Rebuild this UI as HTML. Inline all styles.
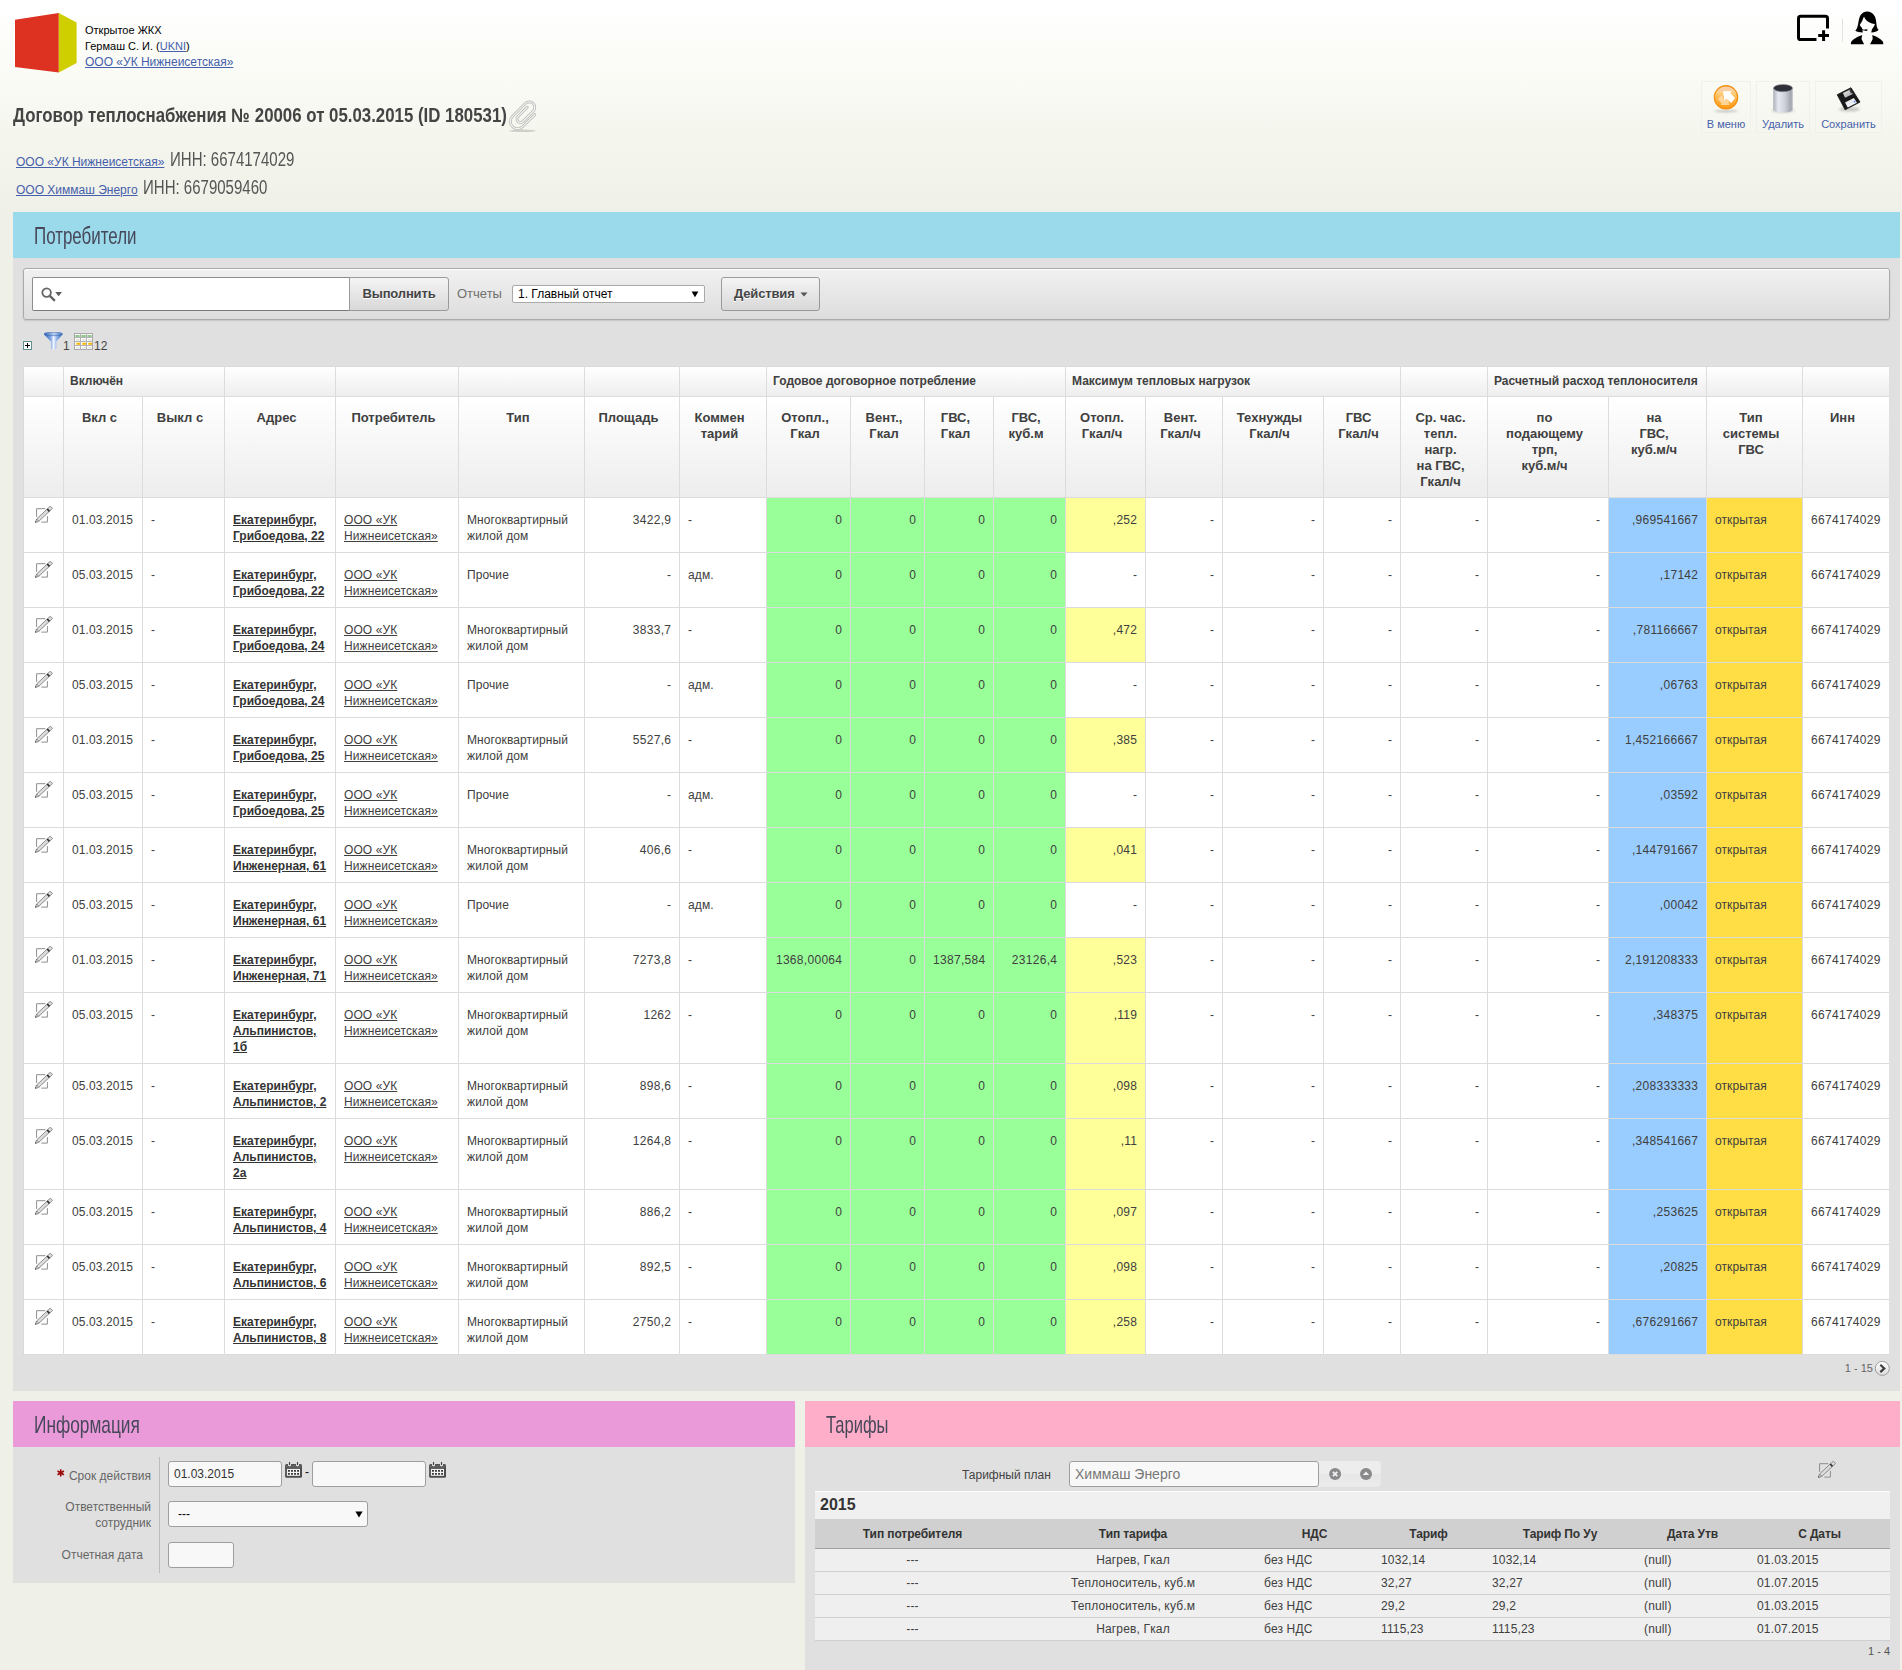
<!DOCTYPE html>
<html lang="ru">
<head>
<meta charset="utf-8">
<title>Договор теплоснабжения № 20006</title>
<style>
*{box-sizing:border-box}
html,body{margin:0;padding:0}
body{width:1902px;height:1670px;overflow:hidden;position:relative;font-family:"Liberation Sans",sans-serif;font-size:12px;color:#333;
 background:#eff0e8 linear-gradient(#ffffff 0,#ffffff 8px,#fafbf5 75px,#f4f5ed 140px,#eff0e8 215px) no-repeat;background-size:1902px 215px}
a{color:#4560ab;text-decoration:underline}
.abs{position:absolute}
.cond{display:inline-block;transform-origin:0 50%;white-space:nowrap}
/* header */
#hd{left:85px;top:23px;font-size:11px;line-height:15.75px;color:#000;white-space:nowrap}
#hd .l3{font-size:12px}
#title{left:13px;top:102.4px;font-size:19.4px;line-height:26px;font-weight:bold;color:#444;transform:scaleX(0.868)}
.innrow{left:16px;white-space:nowrap;font-size:12px;line-height:20px;height:20px}
.innrow .cond{position:absolute;top:-7.3px;font-size:20.9px;line-height:28px;color:#555;transform:scaleX(0.719)}
/* top buttons */
.tb{border:1px solid #f0f1eb;top:81px;height:52px;text-align:center;font-size:11px;color:#4560ab}
.tb span{position:absolute;left:-1px;right:-1px;top:35.500px;line-height:13px}
/* regions */
.rh{height:46px}
.rh .cond{position:absolute;left:21px;top:9.300px;font-size:23.7px;line-height:30px;color:#47475a}
.rb{background:#e0e0e0}
/* toolbar */
#bar{left:23px;top:268px;width:1867px;height:52px;border:1px solid #aaaaaa;border-radius:3px;background:linear-gradient(#f1f1f1,#dddddd);box-shadow:inset 0 1px 0 #fdfdfd,0 1px 2px rgba(0,0,0,.13)}
#srch{left:32px;top:277px;width:318px;height:34px;background:#fff;border:1px solid #8c8c8c;border-bottom-color:#7a7a7a;border-radius:2px 0 0 2px}
.btn{letter-spacing:-.15px;border:1px solid #9a9a9a;background:linear-gradient(#f4f4f4,#d8d8d8);font-weight:bold;font-size:13px;color:#444;text-align:center;line-height:32px;text-shadow:0 1px 0 #fff}
#go{left:349px;top:277px;width:100px;height:34px;border-radius:0 3px 3px 0}
#act{left:721px;top:277px;width:99px;height:34px;border-radius:3px;text-align:left;padding-left:12px}
#rep{left:457px;top:285px;font-size:13px;line-height:18px;color:#707070}
.sel{background:#fff;border:1px solid #a9a9a9;border-radius:2px;color:#000}
/* IR table */
table.ir{position:absolute;left:24px;top:367px;width:1865px;table-layout:fixed;border-collapse:separate;border-spacing:0;font-size:12px;line-height:16px;color:#404040}
table.ir th,table.ir td{border-right:1px solid #dcdcdc;border-bottom:1px solid #dcdcdc;vertical-align:top;overflow:hidden}
table.ir tr.g th{height:30px;padding:6px 0 0 6px;text-align:left;font-size:12px;font-weight:bold;background:linear-gradient(#ffffff,#eeeeee);white-space:nowrap;color:#404040}
table.ir tr.h th{height:101px;padding:13px 9px 0 2px;text-align:center;font-size:13px;font-weight:bold;background:linear-gradient(#ffffff,#ededed);color:#404040}
table.ir td{background:#fff;padding:14px 8px 8px 8px;text-align:left;white-space:nowrap;letter-spacing:.1px}
table.ir td.r{text-align:right;letter-spacing:.3px;padding-right:7.700px}
table.ir td.n{letter-spacing:.3px}
table.ir td.gr{background:#99ff99}
table.ir td.ye{background:#ffff99}
table.ir td.bl{background:#99ccff}
table.ir td.go{background:#ffdd44}
table.ir tr>*:last-child{border-right:0}
table.ir td.e{padding:8px 0 0 11px}
table.ir td a{color:#404040}
table.ir td a.ad{font-weight:bold;color:#333;letter-spacing:0}
svg.pen{display:block}
#tblb{left:23px;top:366px;width:1866px;height:989px;background:#dadada}
/* form */
.lbl{font-size:12px;line-height:16px;color:#666;text-align:right;white-space:nowrap}
.inp{height:26px;border:1px solid #9e9e9e;border-radius:3px;background:#f8f8f8;font-size:12px;line-height:24px;padding-left:5px;color:#333}
/* tariffs */
table.tf{position:absolute;left:815px;top:1519px;width:1075px;table-layout:fixed;border-collapse:separate;border-spacing:0;font-size:12px;color:#404040}
table.tf th{letter-spacing:-.1px;height:30px;background:#d0d0d0;border-bottom:1px solid #a0a0a0;font-size:12px;font-weight:bold;text-align:center;padding:0;color:#333;line-height:28px}
table.tf td{height:23px;background:#efefef;border-bottom:1px solid #cfcfcf;padding:0 0 0 8px;line-height:22px;white-space:nowrap;letter-spacing:.15px}
table.tf td.c{text-align:center;padding:0}
</style>
</head>
<body>

<!-- logo -->
<svg class="abs" style="left:14px;top:12px" width="64" height="62" viewBox="14 12 64 62">
 <polygon points="15,19.8 58.8,13 58.8,72.6 15,67" fill="#dd3122"/>
 <polygon points="58.8,13 76.6,22.6 76.6,62.9 58.8,72.6" fill="#cfcf00"/>
</svg>
<div id="hd" class="abs">Открытое ЖКХ<br>Гермаш С. И. (<a>UKNI</a>)<br><a class="l3">ООО «УК Нижнеисетская»</a></div>

<!-- top right icons -->
<svg class="abs" style="left:1795px;top:10px" width="92" height="38" viewBox="1795 10 92 38">
 <rect x="1798.5" y="16.2" width="29" height="23.4" rx="2.2" fill="none" stroke="#000" stroke-width="3"/>
 <rect x="1816.5" y="28.5" width="15" height="15" fill="#fdfdfb"/>
 <path d="M1818.2 35.6h10.8M1823.6 30.2v10.8" stroke="#000" stroke-width="3"/>
 <path d="M1842.5 19v23" stroke="#e2e2e2" stroke-width="1"/>
 <!-- operator -->
 <path d="M1867.200 11.400C1864.300 11.400 1862 12.800 1860.600 15.100C1859.300 17.200 1858.800 20.300 1858.200 23.600C1857.700 26.400 1857.100 28.900 1855.300 30.800C1857.200 31.900 1860.200 32.500 1862.800 32.400C1862.700 30.800 1862.400 29.300 1861.900 28C1860.800 27.100 1860.100 25.900 1859.800 24.700C1861.200 23.200 1862.500 20.900 1863.100 18.600C1863.400 17.900 1863.700 17.200 1864.100 16.700C1865.600 20.900 1869.800 23.400 1874.900 24C1874.600 25.300 1873.900 26.600 1873 27.700C1872.100 28.900 1871.500 30.500 1871.300 32.400C1874.100 32.500 1876.800 31.500 1878.600 30.100C1877.100 28.700 1876.600 26.300 1876.400 23.600C1876.100 20.300 1875.700 17.200 1873.900 15C1872.300 12.800 1870.100 11.400 1867.200 11.400Z" fill="#000"/>
 <path d="M1860.400 26.700C1861 28.300 1862 29.500 1863.500 30L1865.400 30.200" fill="none" stroke="#000" stroke-width=".9"/>
 <ellipse cx="1866.200" cy="30.100" rx="1.500" ry=".8" fill="#000"/>
 <path d="M1862.200 34.900C1859.500 35.700 1854.200 38.200 1851.700 41.100C1851 42 1850.900 43.200 1850.900 44.300H1864.100L1861.500 39.100Z" fill="#000"/>
 <path d="M1872.300 34.900C1875 35.700 1880.100 38.200 1882.500 41.100C1883.200 42 1883.300 43.200 1883.300 44.300H1870.100L1872.700 39.100Z" fill="#000"/>
</svg>

<!-- title -->
<div id="title" class="abs cond">Договор теплоснабжения № 20006 от 05.03.2015 (ID 180531)</div>
<svg class="abs" style="left:506px;top:98px" width="36" height="36" viewBox="0 0 36 36">
 <defs><filter id="bl" x="-20%" y="-200%" width="140%" height="500%"><feGaussianBlur stdDeviation=".7"/></filter></defs>
 <ellipse cx="16.500" cy="32.800" rx="13.500" ry="1.300" fill="#cfcfc8" filter="url(#bl)"/>
 <g transform="translate(17.200 17.500) rotate(45)" fill="none" stroke-linecap="round">
  <path d="M7.500-9V8.200A7.250 7.250 0 0 1-7 8.200V-10.100A5.500 5.500 0 0 1 4-10.100V4.400A3.500 3.500 0 0 1-3 4.400V-8.800" stroke="#b3b3b3" stroke-width="2.700"/>
  <path d="M7.500-9V8.200A7.250 7.250 0 0 1-7 8.200V-10.100A5.500 5.500 0 0 1 4-10.100V4.400A3.500 3.500 0 0 1-3 4.400V-8.800" stroke="#f3f3f1" stroke-width="1.300"/>
 </g>
</svg>

<div class="abs innrow" style="top:152px"><a>ООО «УК Нижнеисетская»</a><span class="cond" style="left:153.7px">ИНН: 6674174029</span></div>
<div class="abs innrow" style="top:180px"><a>ООО Химмаш Энерго</a><span class="cond" style="left:126.7px">ИНН: 6679059460</span></div>

<!-- buttons -->
<div class="abs tb" style="left:1701px;width:50px"><span>В меню</span></div>
<div class="abs tb" style="left:1756px;width:54px"><span>Удалить</span></div>
<div class="abs tb" style="left:1815px;width:67px"><span>Сохранить</span></div>
<svg class="abs" style="left:1700px;top:80px" width="184" height="36" viewBox="1700 80 184 36">
 <defs>
  <linearGradient id="og" x1="0" y1="0" x2="0" y2="1"><stop offset="0" stop-color="#f8cda6"/><stop offset=".22" stop-color="#fbd0a0"/><stop offset=".3" stop-color="#ffcf7e"/><stop offset=".6" stop-color="#ffb443"/><stop offset="1" stop-color="#ff9712"/></linearGradient>
  <linearGradient id="tg" x1="0" x2="1"><stop offset="0" stop-color="#aeb0b8"/><stop offset=".26" stop-color="#e6e9f2"/><stop offset=".6" stop-color="#cdd0d8"/><stop offset=".9" stop-color="#a3a6ae"/><stop offset="1" stop-color="#bbbec6"/></linearGradient>
  <linearGradient id="sh" x1="0" y1="0" x2="1" y2="1"><stop offset="0" stop-color="#f0f0f0"/><stop offset="1" stop-color="#9c9c9c"/></linearGradient>
  <filter id="b2" x="-20%" y="-100%" width="140%" height="300%"><feGaussianBlur stdDeviation=".8"/></filter>
 </defs>
 <!-- menu -->
 <ellipse cx="1726" cy="111.200" rx="12" ry="1.200" fill="#c4c6c4" filter="url(#b2)"/>
 <circle cx="1726" cy="97.350" r="11.600" fill="url(#og)" stroke="#f4900f" stroke-width="1.300"/>
 <path d="M1717.900 99.200L1722 94.900L1723.200 99L1726.700 99.600L1729 102.300V105H1720.700L1721.600 103.200Z" fill="#ffe0b2" opacity=".8"/>
 <path d="M1722.930 91.200L1731.650 91L1730.300 93.300L1735.100 97.900L1731.270 102.900L1726.290 98.860L1724.370 100.400Z" fill="#fff"/>
 <!-- trash -->
 <ellipse cx="1783" cy="110.600" rx="11.500" ry="2.400" fill="#d3d4d0" filter="url(#b2)"/>
 <path d="M1773.200 88.100V109.200C1773.200 111.100 1777.600 112.600 1783 112.600S1792.800 111.100 1792.800 109.200V88.100Z" fill="url(#tg)"/>
 <ellipse cx="1783" cy="88.100" rx="9.500" ry="3.600" fill="#303138" stroke="#8e9099" stroke-width=".6"/>
 <!-- floppy -->
 <ellipse cx="1849.300" cy="109.300" rx="10.500" ry="2.300" fill="#c9c9c6" filter="url(#b2)"/>
 <path d="M1837.200 94.700L1851 87.700L1860 102.100L1845.100 109.800Z" fill="#19191b" stroke="#19191b" stroke-width=".8" stroke-linejoin="round"/>
 <path d="M1842.900 93.100L1850.200 89.400L1852.800 94L1845.100 97.700Z" fill="url(#sh)"/>
 <path d="M1849.300 90.600L1850.600 90L1852.300 93L1851 93.600Z" fill="#3a3a3d"/>
 <path d="M1845.100 102.500L1853.900 98L1856.900 102.800L1847.700 107.400Z" fill="#f3f4f7"/>
 <path d="M1846.300 103.300L1853.500 99.600M1847.200 104.700L1854.400 101" stroke="#cfd3dc" stroke-width=".5"/>
 <circle cx="1854.600" cy="101.700" r=".9" fill="#5b8def"/>
</svg>

<!-- region: consumers -->
<div class="abs rh" style="left:13px;top:212px;width:1887px;background:#9adaea"><span class="cond" style="transform:scaleX(.7145)">Потребители</span></div>
<div class="abs rb" style="left:13px;top:258px;width:1887px;height:1133px"></div>
<div id="bar" class="abs"></div>
<div id="srch" class="abs">
 <svg class="abs" style="left:7px;top:8px" width="24" height="18" viewBox="0 0 24 18">
  <circle cx="6.600" cy="6.600" r="4.300" fill="none" stroke="#666" stroke-width="1.800"/>
  <path d="M9.800 9.800l4.400 4.400" stroke="#666" stroke-width="2.400" stroke-linecap="round"/>
  <path d="M15.200 6h6.800l-3.400 4.200z" fill="#5e5e5e"/>
 </svg>
</div>
<div id="go" class="abs btn">Выполнить</div>
<div id="rep" class="abs">Отчеты</div>
<div class="abs sel" style="left:512px;top:285px;width:193px;height:18px;font-size:12px;line-height:16px;padding-left:5px">1. Главный отчет
 <svg class="abs" style="left:178px;top:5px" width="8" height="7" viewBox="0 0 8 7"><path d="M.6.600h6.800L4 6.200z" fill="#000"/></svg></div>
<div id="act" class="abs btn">Действия
 <svg class="abs" style="left:78px;top:14px" width="8" height="5" viewBox="0 0 8 5"><path d="M.5.500h7L4 4.500z" fill="#555"/></svg></div>

<!-- small controls -->
<div class="abs" style="left:23px;top:341px;width:9px;height:9px;border:1px solid #5f8f8f;background:#fff">
 <svg class="abs" style="left:0;top:0" width="7" height="7" viewBox="0 0 7 7"><path d="M1 3.500h5M3.500 1v5" stroke="#000" stroke-width="1"/></svg></div>
<svg class="abs" style="left:43px;top:332px" width="21" height="19" viewBox="0 0 21 19">
 <defs><linearGradient id="fg" x1="0" x2="1"><stop offset="0" stop-color="#2b5fb2"/><stop offset=".36" stop-color="#7ea6e4"/><stop offset=".52" stop-color="#f3f7ff"/><stop offset=".66" stop-color="#9fbdef"/><stop offset="1" stop-color="#2b5fb2"/></linearGradient>
 <linearGradient id="fe" x1="0" x2="1"><stop offset="0" stop-color="#2f64b6"/><stop offset=".55" stop-color="#b9cff2"/><stop offset="1" stop-color="#3a70c4"/></linearGradient></defs>
 <path d="M.9 2.200L8 9.700V16.500Q10.600 18.500 13.300 16.500V9.700L19.600 2.200Z" fill="url(#fg)"/>
 <ellipse cx="10.250" cy="1.950" rx="9.300" ry="1.750" fill="url(#fe)" stroke="#2a5aa8" stroke-width=".5"/>
</svg>
<div class="abs" style="left:63px;top:338px;font-size:12px;line-height:16px;color:#444">1</div>
<svg class="abs" style="left:74px;top:333px" width="19" height="17" viewBox="0 0 19 17">
 <rect x=".5" y=".5" width="18" height="16" fill="#fdfdfd" stroke="#a9a9a9"/>
 <path d="M.5 4.500h18M.5 8.500h18M.5 12.500h18M6.500.500v16M12.500.500v16" stroke="#b3b3b3" stroke-width="1"/>
 <path d="M1.300 3h4.400M7.300 3h4.400M13.300 3h4.400" stroke="#6fb56a" stroke-width="1.500"/>
 <path d="M2 6.800h3.700M8 6.800h3.700M14 6.800h3.700M2 14.800h3.700M8 14.800h3.700M14 14.800h3.700" stroke="#dcdcdc" stroke-width="1.200"/>
 <path d="M2.300 10.700h3.700M8.300 10.700h3.700M14.300 10.700h3.700" stroke="#f7b500" stroke-width="1.900"/>
</svg>
<div class="abs" style="left:94px;top:338px;font-size:12px;line-height:16px;color:#444">12</div>

<div id="tblb" class="abs"></div>
<table class="ir"><colgroup><col style="width:40px"><col style="width:79px"><col style="width:82px"><col style="width:111px"><col style="width:123px"><col style="width:126px"><col style="width:95px"><col style="width:87px"><col style="width:84px"><col style="width:74px"><col style="width:69px"><col style="width:72px"><col style="width:80px"><col style="width:77px"><col style="width:101px"><col style="width:77px"><col style="width:87px"><col style="width:121px"><col style="width:98px"><col style="width:96px"><col style="width:86px"></colgroup>
<tr class="g"><th colspan="1"></th><th colspan="2">Включён</th><th colspan="1"></th><th colspan="1"></th><th colspan="1"></th><th colspan="1"></th><th colspan="1"></th><th colspan="4">Годовое договорное потребление</th><th colspan="4">Максимум тепловых нагрузок</th><th colspan="1"></th><th colspan="2">Расчетный расход теплоносителя</th><th colspan="1"></th><th colspan="1"></th></tr>
<tr class="h"><th></th><th>Вкл с</th><th>Выкл с</th><th>Адрес</th><th>Потребитель</th><th>Тип</th><th>Площадь</th><th>Коммен<br>тарий</th><th>Отопл.,<br>Гкал</th><th>Вент.,<br>Гкал</th><th>ГВС,<br>Гкал</th><th>ГВС,<br>куб.м</th><th>Отопл.<br>Гкал/ч</th><th>Вент.<br>Гкал/ч</th><th>Технужды<br>Гкал/ч</th><th>ГВС<br>Гкал/ч</th><th>Ср. час.<br>тепл.<br>нагр.<br>на ГВС,<br>Гкал/ч</th><th>по<br>подающему<br>трп,<br>куб.м/ч</th><th>на<br>ГВС,<br>куб.м/ч</th><th>Тип<br>системы<br>ГВС</th><th>Инн</th></tr>
<tr><td class="e"><svg class="pen" width="19" height="18" viewBox="0 0 19 18"><path d="M10.400 2.700H1.600V10.900M6.300 16.100H12.400V10.100" fill="none" stroke="#8e8e8e"/><path d="M.1 16.600L1.630 12.970L15.300.130L17.500 2.470L3.810 15.310Z" fill="#dcdcdc" stroke="#757575" stroke-width=".8"/><path d="M12.250 3L14.430 5.340" stroke="#2e2e2e" stroke-width="1.700"/><path d="M1.630 12.970L3.810 15.310" stroke="#555" stroke-width=".6"/><path d="M.1 16.600L.75 15.100L1.550 15.950Z" fill="#444"/></svg></td><td>01.03.2015</td><td>-</td><td><a class="ad">Екатеринбург,<br>Грибоедова, 22</a></td><td><a class="cs">ООО «УК<br>Нижнеисетская»</a></td><td>Многоквартирный<br>жилой дом</td><td class="r">3422,9</td><td>-</td><td class="r gr">0</td><td class="r gr">0</td><td class="r gr">0</td><td class="r gr">0</td><td class="r ye">,252</td><td class="r">-</td><td class="r">-</td><td class="r">-</td><td class="r">-</td><td class="r">-</td><td class="r bl">,969541667</td><td class="go">открытая</td><td class="n">6674174029</td></tr>
<tr><td class="e"><svg class="pen" width="19" height="18" viewBox="0 0 19 18"><path d="M10.400 2.700H1.600V10.900M6.300 16.100H12.400V10.100" fill="none" stroke="#8e8e8e"/><path d="M.1 16.600L1.630 12.970L15.300.130L17.500 2.470L3.810 15.310Z" fill="#dcdcdc" stroke="#757575" stroke-width=".8"/><path d="M12.250 3L14.430 5.340" stroke="#2e2e2e" stroke-width="1.700"/><path d="M1.630 12.970L3.810 15.310" stroke="#555" stroke-width=".6"/><path d="M.1 16.600L.75 15.100L1.550 15.950Z" fill="#444"/></svg></td><td>05.03.2015</td><td>-</td><td><a class="ad">Екатеринбург,<br>Грибоедова, 22</a></td><td><a class="cs">ООО «УК<br>Нижнеисетская»</a></td><td>Прочие</td><td class="r">-</td><td>адм.</td><td class="r gr">0</td><td class="r gr">0</td><td class="r gr">0</td><td class="r gr">0</td><td class="r">-</td><td class="r">-</td><td class="r">-</td><td class="r">-</td><td class="r">-</td><td class="r">-</td><td class="r bl">,17142</td><td class="go">открытая</td><td class="n">6674174029</td></tr>
<tr><td class="e"><svg class="pen" width="19" height="18" viewBox="0 0 19 18"><path d="M10.400 2.700H1.600V10.900M6.300 16.100H12.400V10.100" fill="none" stroke="#8e8e8e"/><path d="M.1 16.600L1.630 12.970L15.300.130L17.500 2.470L3.810 15.310Z" fill="#dcdcdc" stroke="#757575" stroke-width=".8"/><path d="M12.250 3L14.430 5.340" stroke="#2e2e2e" stroke-width="1.700"/><path d="M1.630 12.970L3.810 15.310" stroke="#555" stroke-width=".6"/><path d="M.1 16.600L.75 15.100L1.550 15.950Z" fill="#444"/></svg></td><td>01.03.2015</td><td>-</td><td><a class="ad">Екатеринбург,<br>Грибоедова, 24</a></td><td><a class="cs">ООО «УК<br>Нижнеисетская»</a></td><td>Многоквартирный<br>жилой дом</td><td class="r">3833,7</td><td>-</td><td class="r gr">0</td><td class="r gr">0</td><td class="r gr">0</td><td class="r gr">0</td><td class="r ye">,472</td><td class="r">-</td><td class="r">-</td><td class="r">-</td><td class="r">-</td><td class="r">-</td><td class="r bl">,781166667</td><td class="go">открытая</td><td class="n">6674174029</td></tr>
<tr><td class="e"><svg class="pen" width="19" height="18" viewBox="0 0 19 18"><path d="M10.400 2.700H1.600V10.900M6.300 16.100H12.400V10.100" fill="none" stroke="#8e8e8e"/><path d="M.1 16.600L1.630 12.970L15.300.130L17.500 2.470L3.810 15.310Z" fill="#dcdcdc" stroke="#757575" stroke-width=".8"/><path d="M12.250 3L14.430 5.340" stroke="#2e2e2e" stroke-width="1.700"/><path d="M1.630 12.970L3.810 15.310" stroke="#555" stroke-width=".6"/><path d="M.1 16.600L.75 15.100L1.550 15.950Z" fill="#444"/></svg></td><td>05.03.2015</td><td>-</td><td><a class="ad">Екатеринбург,<br>Грибоедова, 24</a></td><td><a class="cs">ООО «УК<br>Нижнеисетская»</a></td><td>Прочие</td><td class="r">-</td><td>адм.</td><td class="r gr">0</td><td class="r gr">0</td><td class="r gr">0</td><td class="r gr">0</td><td class="r">-</td><td class="r">-</td><td class="r">-</td><td class="r">-</td><td class="r">-</td><td class="r">-</td><td class="r bl">,06763</td><td class="go">открытая</td><td class="n">6674174029</td></tr>
<tr><td class="e"><svg class="pen" width="19" height="18" viewBox="0 0 19 18"><path d="M10.400 2.700H1.600V10.900M6.300 16.100H12.400V10.100" fill="none" stroke="#8e8e8e"/><path d="M.1 16.600L1.630 12.970L15.300.130L17.500 2.470L3.810 15.310Z" fill="#dcdcdc" stroke="#757575" stroke-width=".8"/><path d="M12.250 3L14.430 5.340" stroke="#2e2e2e" stroke-width="1.700"/><path d="M1.630 12.970L3.810 15.310" stroke="#555" stroke-width=".6"/><path d="M.1 16.600L.75 15.100L1.550 15.950Z" fill="#444"/></svg></td><td>01.03.2015</td><td>-</td><td><a class="ad">Екатеринбург,<br>Грибоедова, 25</a></td><td><a class="cs">ООО «УК<br>Нижнеисетская»</a></td><td>Многоквартирный<br>жилой дом</td><td class="r">5527,6</td><td>-</td><td class="r gr">0</td><td class="r gr">0</td><td class="r gr">0</td><td class="r gr">0</td><td class="r ye">,385</td><td class="r">-</td><td class="r">-</td><td class="r">-</td><td class="r">-</td><td class="r">-</td><td class="r bl">1,452166667</td><td class="go">открытая</td><td class="n">6674174029</td></tr>
<tr><td class="e"><svg class="pen" width="19" height="18" viewBox="0 0 19 18"><path d="M10.400 2.700H1.600V10.900M6.300 16.100H12.400V10.100" fill="none" stroke="#8e8e8e"/><path d="M.1 16.600L1.630 12.970L15.300.130L17.500 2.470L3.810 15.310Z" fill="#dcdcdc" stroke="#757575" stroke-width=".8"/><path d="M12.250 3L14.430 5.340" stroke="#2e2e2e" stroke-width="1.700"/><path d="M1.630 12.970L3.810 15.310" stroke="#555" stroke-width=".6"/><path d="M.1 16.600L.75 15.100L1.550 15.950Z" fill="#444"/></svg></td><td>05.03.2015</td><td>-</td><td><a class="ad">Екатеринбург,<br>Грибоедова, 25</a></td><td><a class="cs">ООО «УК<br>Нижнеисетская»</a></td><td>Прочие</td><td class="r">-</td><td>адм.</td><td class="r gr">0</td><td class="r gr">0</td><td class="r gr">0</td><td class="r gr">0</td><td class="r">-</td><td class="r">-</td><td class="r">-</td><td class="r">-</td><td class="r">-</td><td class="r">-</td><td class="r bl">,03592</td><td class="go">открытая</td><td class="n">6674174029</td></tr>
<tr><td class="e"><svg class="pen" width="19" height="18" viewBox="0 0 19 18"><path d="M10.400 2.700H1.600V10.900M6.300 16.100H12.400V10.100" fill="none" stroke="#8e8e8e"/><path d="M.1 16.600L1.630 12.970L15.300.130L17.500 2.470L3.810 15.310Z" fill="#dcdcdc" stroke="#757575" stroke-width=".8"/><path d="M12.250 3L14.430 5.340" stroke="#2e2e2e" stroke-width="1.700"/><path d="M1.630 12.970L3.810 15.310" stroke="#555" stroke-width=".6"/><path d="M.1 16.600L.75 15.100L1.550 15.950Z" fill="#444"/></svg></td><td>01.03.2015</td><td>-</td><td><a class="ad">Екатеринбург,<br>Инженерная, 61</a></td><td><a class="cs">ООО «УК<br>Нижнеисетская»</a></td><td>Многоквартирный<br>жилой дом</td><td class="r">406,6</td><td>-</td><td class="r gr">0</td><td class="r gr">0</td><td class="r gr">0</td><td class="r gr">0</td><td class="r ye">,041</td><td class="r">-</td><td class="r">-</td><td class="r">-</td><td class="r">-</td><td class="r">-</td><td class="r bl">,144791667</td><td class="go">открытая</td><td class="n">6674174029</td></tr>
<tr><td class="e"><svg class="pen" width="19" height="18" viewBox="0 0 19 18"><path d="M10.400 2.700H1.600V10.900M6.300 16.100H12.400V10.100" fill="none" stroke="#8e8e8e"/><path d="M.1 16.600L1.630 12.970L15.300.130L17.500 2.470L3.810 15.310Z" fill="#dcdcdc" stroke="#757575" stroke-width=".8"/><path d="M12.250 3L14.430 5.340" stroke="#2e2e2e" stroke-width="1.700"/><path d="M1.630 12.970L3.810 15.310" stroke="#555" stroke-width=".6"/><path d="M.1 16.600L.75 15.100L1.550 15.950Z" fill="#444"/></svg></td><td>05.03.2015</td><td>-</td><td><a class="ad">Екатеринбург,<br>Инженерная, 61</a></td><td><a class="cs">ООО «УК<br>Нижнеисетская»</a></td><td>Прочие</td><td class="r">-</td><td>адм.</td><td class="r gr">0</td><td class="r gr">0</td><td class="r gr">0</td><td class="r gr">0</td><td class="r">-</td><td class="r">-</td><td class="r">-</td><td class="r">-</td><td class="r">-</td><td class="r">-</td><td class="r bl">,00042</td><td class="go">открытая</td><td class="n">6674174029</td></tr>
<tr><td class="e"><svg class="pen" width="19" height="18" viewBox="0 0 19 18"><path d="M10.400 2.700H1.600V10.900M6.300 16.100H12.400V10.100" fill="none" stroke="#8e8e8e"/><path d="M.1 16.600L1.630 12.970L15.300.130L17.500 2.470L3.810 15.310Z" fill="#dcdcdc" stroke="#757575" stroke-width=".8"/><path d="M12.250 3L14.430 5.340" stroke="#2e2e2e" stroke-width="1.700"/><path d="M1.630 12.970L3.810 15.310" stroke="#555" stroke-width=".6"/><path d="M.1 16.600L.75 15.100L1.550 15.950Z" fill="#444"/></svg></td><td>01.03.2015</td><td>-</td><td><a class="ad">Екатеринбург,<br>Инженерная, 71</a></td><td><a class="cs">ООО «УК<br>Нижнеисетская»</a></td><td>Многоквартирный<br>жилой дом</td><td class="r">7273,8</td><td>-</td><td class="r gr">1368,00064</td><td class="r gr">0</td><td class="r gr">1387,584</td><td class="r gr">23126,4</td><td class="r ye">,523</td><td class="r">-</td><td class="r">-</td><td class="r">-</td><td class="r">-</td><td class="r">-</td><td class="r bl">2,191208333</td><td class="go">открытая</td><td class="n">6674174029</td></tr>
<tr><td class="e"><svg class="pen" width="19" height="18" viewBox="0 0 19 18"><path d="M10.400 2.700H1.600V10.900M6.300 16.100H12.400V10.100" fill="none" stroke="#8e8e8e"/><path d="M.1 16.600L1.630 12.970L15.300.130L17.500 2.470L3.810 15.310Z" fill="#dcdcdc" stroke="#757575" stroke-width=".8"/><path d="M12.250 3L14.430 5.340" stroke="#2e2e2e" stroke-width="1.700"/><path d="M1.630 12.970L3.810 15.310" stroke="#555" stroke-width=".6"/><path d="M.1 16.600L.75 15.100L1.550 15.950Z" fill="#444"/></svg></td><td>05.03.2015</td><td>-</td><td><a class="ad">Екатеринбург,<br>Альпинистов,<br>1б</a></td><td><a class="cs">ООО «УК<br>Нижнеисетская»</a></td><td>Многоквартирный<br>жилой дом</td><td class="r">1262</td><td>-</td><td class="r gr">0</td><td class="r gr">0</td><td class="r gr">0</td><td class="r gr">0</td><td class="r ye">,119</td><td class="r">-</td><td class="r">-</td><td class="r">-</td><td class="r">-</td><td class="r">-</td><td class="r bl">,348375</td><td class="go">открытая</td><td class="n">6674174029</td></tr>
<tr><td class="e"><svg class="pen" width="19" height="18" viewBox="0 0 19 18"><path d="M10.400 2.700H1.600V10.900M6.300 16.100H12.400V10.100" fill="none" stroke="#8e8e8e"/><path d="M.1 16.600L1.630 12.970L15.300.130L17.500 2.470L3.810 15.310Z" fill="#dcdcdc" stroke="#757575" stroke-width=".8"/><path d="M12.250 3L14.430 5.340" stroke="#2e2e2e" stroke-width="1.700"/><path d="M1.630 12.970L3.810 15.310" stroke="#555" stroke-width=".6"/><path d="M.1 16.600L.75 15.100L1.550 15.950Z" fill="#444"/></svg></td><td>05.03.2015</td><td>-</td><td><a class="ad">Екатеринбург,<br>Альпинистов, 2</a></td><td><a class="cs">ООО «УК<br>Нижнеисетская»</a></td><td>Многоквартирный<br>жилой дом</td><td class="r">898,6</td><td>-</td><td class="r gr">0</td><td class="r gr">0</td><td class="r gr">0</td><td class="r gr">0</td><td class="r ye">,098</td><td class="r">-</td><td class="r">-</td><td class="r">-</td><td class="r">-</td><td class="r">-</td><td class="r bl">,208333333</td><td class="go">открытая</td><td class="n">6674174029</td></tr>
<tr><td class="e"><svg class="pen" width="19" height="18" viewBox="0 0 19 18"><path d="M10.400 2.700H1.600V10.900M6.300 16.100H12.400V10.100" fill="none" stroke="#8e8e8e"/><path d="M.1 16.600L1.630 12.970L15.300.130L17.500 2.470L3.810 15.310Z" fill="#dcdcdc" stroke="#757575" stroke-width=".8"/><path d="M12.250 3L14.430 5.340" stroke="#2e2e2e" stroke-width="1.700"/><path d="M1.630 12.970L3.810 15.310" stroke="#555" stroke-width=".6"/><path d="M.1 16.600L.75 15.100L1.550 15.950Z" fill="#444"/></svg></td><td>05.03.2015</td><td>-</td><td><a class="ad">Екатеринбург,<br>Альпинистов,<br>2а</a></td><td><a class="cs">ООО «УК<br>Нижнеисетская»</a></td><td>Многоквартирный<br>жилой дом</td><td class="r">1264,8</td><td>-</td><td class="r gr">0</td><td class="r gr">0</td><td class="r gr">0</td><td class="r gr">0</td><td class="r ye">,11</td><td class="r">-</td><td class="r">-</td><td class="r">-</td><td class="r">-</td><td class="r">-</td><td class="r bl">,348541667</td><td class="go">открытая</td><td class="n">6674174029</td></tr>
<tr><td class="e"><svg class="pen" width="19" height="18" viewBox="0 0 19 18"><path d="M10.400 2.700H1.600V10.900M6.300 16.100H12.400V10.100" fill="none" stroke="#8e8e8e"/><path d="M.1 16.600L1.630 12.970L15.300.130L17.500 2.470L3.810 15.310Z" fill="#dcdcdc" stroke="#757575" stroke-width=".8"/><path d="M12.250 3L14.430 5.340" stroke="#2e2e2e" stroke-width="1.700"/><path d="M1.630 12.970L3.810 15.310" stroke="#555" stroke-width=".6"/><path d="M.1 16.600L.75 15.100L1.550 15.950Z" fill="#444"/></svg></td><td>05.03.2015</td><td>-</td><td><a class="ad">Екатеринбург,<br>Альпинистов, 4</a></td><td><a class="cs">ООО «УК<br>Нижнеисетская»</a></td><td>Многоквартирный<br>жилой дом</td><td class="r">886,2</td><td>-</td><td class="r gr">0</td><td class="r gr">0</td><td class="r gr">0</td><td class="r gr">0</td><td class="r ye">,097</td><td class="r">-</td><td class="r">-</td><td class="r">-</td><td class="r">-</td><td class="r">-</td><td class="r bl">,253625</td><td class="go">открытая</td><td class="n">6674174029</td></tr>
<tr><td class="e"><svg class="pen" width="19" height="18" viewBox="0 0 19 18"><path d="M10.400 2.700H1.600V10.900M6.300 16.100H12.400V10.100" fill="none" stroke="#8e8e8e"/><path d="M.1 16.600L1.630 12.970L15.300.130L17.500 2.470L3.810 15.310Z" fill="#dcdcdc" stroke="#757575" stroke-width=".8"/><path d="M12.250 3L14.430 5.340" stroke="#2e2e2e" stroke-width="1.700"/><path d="M1.630 12.970L3.810 15.310" stroke="#555" stroke-width=".6"/><path d="M.1 16.600L.75 15.100L1.550 15.950Z" fill="#444"/></svg></td><td>05.03.2015</td><td>-</td><td><a class="ad">Екатеринбург,<br>Альпинистов, 6</a></td><td><a class="cs">ООО «УК<br>Нижнеисетская»</a></td><td>Многоквартирный<br>жилой дом</td><td class="r">892,5</td><td>-</td><td class="r gr">0</td><td class="r gr">0</td><td class="r gr">0</td><td class="r gr">0</td><td class="r ye">,098</td><td class="r">-</td><td class="r">-</td><td class="r">-</td><td class="r">-</td><td class="r">-</td><td class="r bl">,20825</td><td class="go">открытая</td><td class="n">6674174029</td></tr>
<tr><td class="e"><svg class="pen" width="19" height="18" viewBox="0 0 19 18"><path d="M10.400 2.700H1.600V10.900M6.300 16.100H12.400V10.100" fill="none" stroke="#8e8e8e"/><path d="M.1 16.600L1.630 12.970L15.300.130L17.500 2.470L3.810 15.310Z" fill="#dcdcdc" stroke="#757575" stroke-width=".8"/><path d="M12.250 3L14.430 5.340" stroke="#2e2e2e" stroke-width="1.700"/><path d="M1.630 12.970L3.810 15.310" stroke="#555" stroke-width=".6"/><path d="M.1 16.600L.75 15.100L1.550 15.950Z" fill="#444"/></svg></td><td>05.03.2015</td><td>-</td><td><a class="ad">Екатеринбург,<br>Альпинистов, 8</a></td><td><a class="cs">ООО «УК<br>Нижнеисетская»</a></td><td>Многоквартирный<br>жилой дом</td><td class="r">2750,2</td><td>-</td><td class="r gr">0</td><td class="r gr">0</td><td class="r gr">0</td><td class="r gr">0</td><td class="r ye">,258</td><td class="r">-</td><td class="r">-</td><td class="r">-</td><td class="r">-</td><td class="r">-</td><td class="r bl">,676291667</td><td class="go">открытая</td><td class="n">6674174029</td></tr>
</table>

<div class="abs" style="left:1800px;top:1362px;width:73px;text-align:right;font-size:11px;line-height:13px;color:#666">1 - 15</div>
<svg class="abs" style="left:1874px;top:1360px" width="17" height="17" viewBox="0 0 17 17">
 <defs><linearGradient id="cg" x1="0" y1="0" x2="0" y2="1"><stop offset="0" stop-color="#ffffff"/><stop offset="1" stop-color="#dcdcdc"/></linearGradient></defs>
 <circle cx="8.300" cy="8.400" r="7" fill="url(#cg)" stroke="#9c9c9c" stroke-width="1"/>
 <path d="M6.300 4.700l4 3.700l-4 3.700" fill="none" stroke="#3f3f3f" stroke-width="2.200"/>
</svg>

<!-- region: info -->
<div class="abs rh" style="left:13px;top:1401px;width:782px;background:#ea9ad9"><span class="cond" style="transform:scaleX(.72);font-size:24px">Информация</span></div>
<div class="abs rb" style="left:13px;top:1447px;width:782px;height:136px"></div>
<div class="abs" style="left:159px;top:1457px;width:1px;height:116px;background:#bcbcbc"></div>
<svg class="abs" style="left:56.800px;top:1469px" width="8" height="8" viewBox="0 0 8 8"><path d="M3.700.2v7.400M.5 2l6.400 3.800M6.900 2L.5 5.800" stroke="#9c0a0a" stroke-width="1.600"/></svg>
<div class="abs lbl" style="left:20px;top:1468px;width:131px">Срок действия</div>
<div class="abs inp" style="left:168px;top:1461px;width:114px">01.03.2015</div>
<svg class="abs cal" style="left:285px;top:1461px" width="18" height="18" viewBox="0 0 18 18"><rect x=".1" y="3" width="16.900" height="13.800" rx="1.600" fill="#4d4d4d"/><rect x=".9" y="3.600" width="15.300" height="3.600" fill="#5f5f5f"/><rect x="3" y=".2" width="3" height="5" rx="1.200" fill="#e6e6e6"/><rect x="11" y=".2" width="3" height="5" rx="1.200" fill="#e6e6e6"/><rect x="3.900" y=".8" width="1.200" height="3.200" rx=".6" fill="#444"/><rect x="11.900" y=".8" width="1.200" height="3.200" rx=".6" fill="#444"/><rect x="1.900" y="7.900" width="13.100" height="6.900" fill="#f4f4f4"/><path d="M2.950 9.900h12M2.950 12.900h12" stroke="#333" stroke-width="1.900" stroke-dasharray="1.900 1.150"/></svg>
<div class="abs" style="left:305px;top:1464px;font-size:12px;line-height:16px;color:#111">-</div>
<div class="abs inp" style="left:312px;top:1461px;width:114px"></div>
<svg class="abs cal" style="left:429px;top:1461px" width="18" height="18" viewBox="0 0 18 18"><rect x=".1" y="3" width="16.900" height="13.800" rx="1.600" fill="#4d4d4d"/><rect x=".9" y="3.600" width="15.300" height="3.600" fill="#5f5f5f"/><rect x="3" y=".2" width="3" height="5" rx="1.200" fill="#e6e6e6"/><rect x="11" y=".2" width="3" height="5" rx="1.200" fill="#e6e6e6"/><rect x="3.900" y=".8" width="1.200" height="3.200" rx=".6" fill="#444"/><rect x="11.900" y=".8" width="1.200" height="3.200" rx=".6" fill="#444"/><rect x="1.900" y="7.900" width="13.100" height="6.900" fill="#f4f4f4"/><path d="M2.950 9.900h12M2.950 12.900h12" stroke="#333" stroke-width="1.900" stroke-dasharray="1.900 1.150"/></svg>

<div class="abs lbl" style="left:20px;top:1499px;width:131px">Ответственный<br>сотрудник</div>
<div class="abs inp" style="left:168px;top:1501px;width:200px;padding-left:9px;color:#000">---
 <svg class="abs" style="left:186px;top:9px" width="8" height="7" viewBox="0 0 8 7"><path d="M.4.400h7.200L4 6.600z" fill="#000"/></svg></div>
<div class="abs lbl" style="left:20px;top:1547px;width:123px">Отчетная дата</div>
<div class="abs inp" style="left:168px;top:1542px;width:66px"></div>

<!-- region: tariffs -->
<div class="abs rh" style="left:805px;top:1401px;width:1095px;background:#ffaec9"><span class="cond" style="transform:scaleX(.688);font-size:24px">Тарифы</span></div>
<div class="abs rb" style="left:805px;top:1447px;width:1095px;height:223px"></div>
<div class="abs" style="left:962px;top:1467px;font-size:12px;line-height:16px;color:#444;white-space:nowrap">Тарифный план</div>
<div class="abs" style="left:1317px;top:1461px;width:64px;height:26px;background:linear-gradient(#ededed 0,#ededed 50%,#e7e7e7 51%,#ebebeb 100%);border-radius:0 4px 4px 0"></div>
<div class="abs inp" style="left:1069px;top:1461px;width:250px;font-size:14px;color:#777;padding-left:5px">Химмаш Энерго</div>
<svg class="abs" style="left:1328px;top:1467px" width="14" height="14" viewBox="0 0 14 14"><circle cx="7.100" cy="7" r="6" fill="#8a898c"/><path d="M4.900 4.800l4.400 4.400M9.300 4.800L4.900 9.200" stroke="#f0f0f0" stroke-width="1.800"/></svg>
<svg class="abs" style="left:1359px;top:1467px" width="14" height="14" viewBox="0 0 14 14"><circle cx="7" cy="7" r="6" fill="#8a898c"/><path d="M3.800 8L7 4.600l3.200 3.400z" fill="#f0f0f0"/></svg>
<div class="abs" style="left:1818px;top:1461px"><svg class="pen" width="19" height="18" viewBox="0 0 19 18"><path d="M10.400 2.700H1.600V10.900M6.300 16.100H12.400V10.100" fill="none" stroke="#8e8e8e"/><path d="M.1 16.600L1.630 12.970L15.300.130L17.500 2.470L3.810 15.310Z" fill="#dcdcdc" stroke="#757575" stroke-width=".8"/><path d="M12.250 3L14.430 5.340" stroke="#2e2e2e" stroke-width="1.700"/><path d="M1.630 12.970L3.810 15.310" stroke="#555" stroke-width=".6"/><path d="M.1 16.600L.75 15.100L1.550 15.950Z" fill="#444"/></svg></div>
<div class="abs" style="left:815px;top:1491px;width:1075px;height:28px;background:#f0f0f0;border-top:1px solid #fdfdfd;font-size:16px;font-weight:bold;line-height:25px;padding-left:5px;color:#333">2015</div>
<table class="tf"><colgroup><col style="width:195px"><col style="width:246px"><col style="width:117px"><col style="width:111px"><col style="width:152px"><col style="width:113px"><col style="width:141px"></colgroup>
<tr><th>Тип потребителя</th><th>Тип тарифа</th><th>НДС</th><th>Тариф</th><th>Тариф По Уу</th><th>Дата Утв</th><th>С Даты</th></tr>
<tr><td class="c">---</td><td class="c">Нагрев, Гкал</td><td>без НДС</td><td>1032,14</td><td>1032,14</td><td>(null)</td><td>01.03.2015</td></tr>
<tr><td class="c">---</td><td class="c">Теплоноситель, куб.м</td><td>без НДС</td><td>32,27</td><td>32,27</td><td>(null)</td><td>01.07.2015</td></tr>
<tr><td class="c">---</td><td class="c">Теплоноситель, куб.м</td><td>без НДС</td><td>29,2</td><td>29,2</td><td>(null)</td><td>01.03.2015</td></tr>
<tr><td class="c">---</td><td class="c">Нагрев, Гкал</td><td>без НДС</td><td>1115,23</td><td>1115,23</td><td>(null)</td><td>01.07.2015</td></tr>
</table>
<div class="abs" style="left:1820px;top:1645px;width:70px;text-align:right;font-size:11px;line-height:13px;color:#555">1 - 4</div>

</body>
</html>
